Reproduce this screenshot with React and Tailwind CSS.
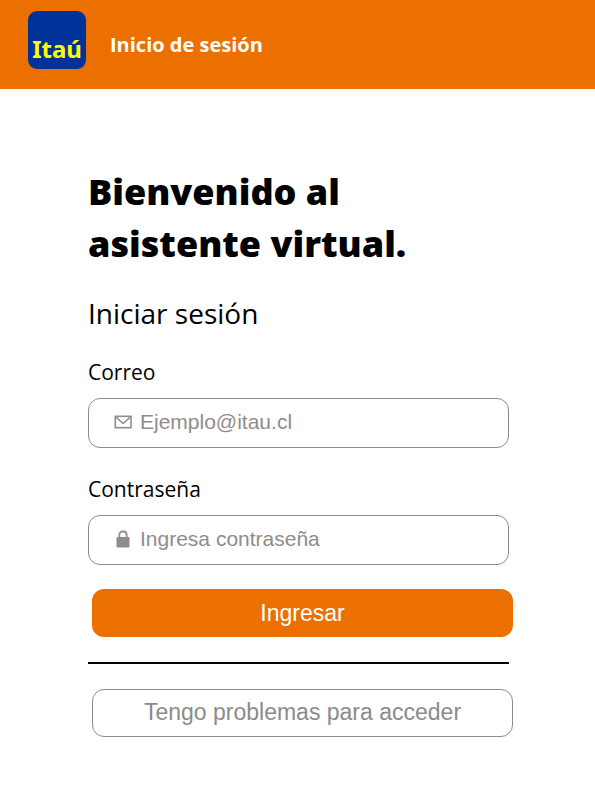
import React from "react";

function Logo() {
  return (
    <svg viewBox="0 0 58 58" className="size-[58px] shrink-0" role="img" aria-label="Itaú">
      <rect width="58" height="58" rx="9" fill="#003399" />
      <text x="29" y="47" textAnchor="middle" fontSize="24" fontWeight="700" fill="#ffff00" className="font-['Noto_Sans',sans-serif]">
        Itaú
      </text>
    </svg>
  );
}

function MailIcon() {
  return (
    <svg viewBox="0 0 18 14" className="h-[14px] w-[18px]" fill="none" stroke="currentColor" strokeWidth="1.6" aria-hidden="true">
      <rect x="1.3" y="1.3" width="15.7" height="11.4" />
      <path d="M1.8 2l7.3 6.500 7.300-6.500" />
    </svg>
  );
}

function LockIcon() {
  return (
    <svg viewBox="0 0 14 18" className="h-[18px] w-[14px]" aria-hidden="true">
      <path d="M3.400 8.500V4.600a3.100 3.100 0 0 1 3.100-3.100h1a3.100 3.100 0 0 1 3.100 3.100V8.500" fill="none" stroke="currentColor" strokeWidth="1.8" />
      <rect x="0.5" y="7" width="13" height="10.5" rx="1" fill="currentColor" />
    </svg>
  );
}

function Field({ id, label, type, placeholder, icon }) {
  return (
    <div className="mb-6">
      <label htmlFor={id} className="mb-[9px] block text-[21px] leading-[34px]">
        {label}
      </label>
      <div className="flex h-[50px] items-center rounded-xl border border-[#8b8b8b] px-[25px] pb-0.5 font-['Liberation_Sans',Arial,sans-serif] text-[#918c8b]">
        <span className="flex w-[18px] shrink-0 justify-center">{icon}</span>
        <input
          id={id}
          type={type}
          placeholder={placeholder}
          className="ml-2 min-w-0 flex-1 bg-transparent text-[21px] outline-none placeholder:text-[#918c8b]"
        />
      </div>
    </div>
  );
}

export default function App() {
  return (
    <div className="min-h-screen bg-white font-['Open_Sans','Segoe_UI',sans-serif] text-black">
      <header className="flex h-[89px] items-start bg-[#ec7000] pt-[11px] pl-7">
        <Logo />
        <p className="ml-6 pt-4 text-[20px] leading-[36px] font-bold text-white">Inicio de sesión</p>
      </header>
      <main className="pt-[77px] pr-[86px] pb-10 pl-[88px]">
        <h1 className="text-[36px] leading-[52px] font-extrabold">
          Bienvenido al
          <br />
          asistente virtual.
        </h1>
        <h2 className="mt-[23px] mb-[22px] text-[28px] leading-[40px]">Iniciar sesión</h2>
        <form onSubmit={(e) => e.preventDefault()}>
          <Field id="correo" label="Correo" type="email" placeholder="Ejemplo@itau.cl" icon={<MailIcon />} />
          <Field id="clave" label="Contraseña" type="password" placeholder="Ingresa contraseña" icon={<LockIcon />} />
          <div className="-mr-1 pl-1 font-['Liberation_Sans',Arial,sans-serif] text-[23px]">
            <button type="submit" className="h-12 w-full rounded-xl bg-[#ec7000] text-white">
              Ingresar
            </button>
          </div>
          <hr className="my-[25px] border-t-2 border-black" />
          <div className="-mr-1 pl-1 font-['Liberation_Sans',Arial,sans-serif] text-[23px]">
            <button type="button" className="h-12 w-full rounded-xl border border-[#8b8b8b] pb-0.5 text-[#8b8b8b]">
              Tengo problemas para acceder
            </button>
          </div>
        </form>
      </main>
    </div>
  );
}
